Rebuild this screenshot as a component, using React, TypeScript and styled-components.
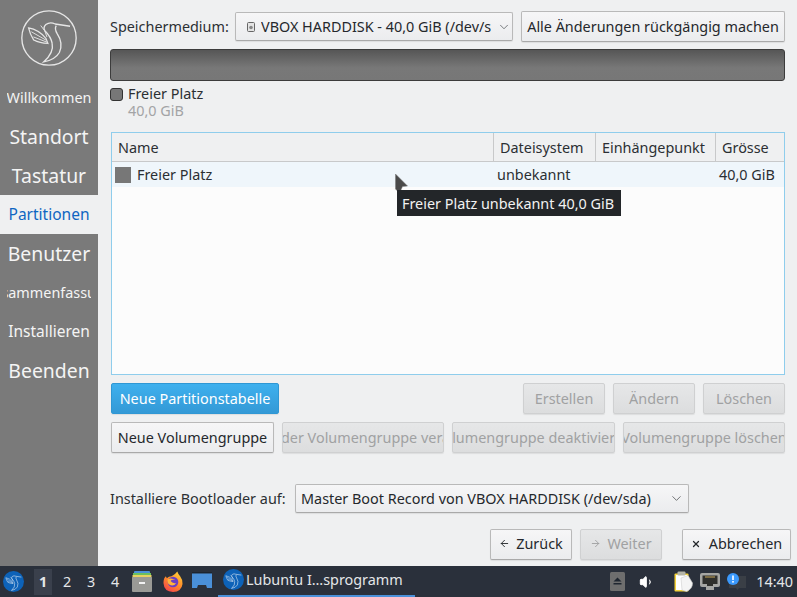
import React from 'react';
import styled, { createGlobalStyle } from 'styled-components';
import { ChevronDown, ArrowLeft, ArrowRight, X, Volume1 } from 'lucide-react';

const GlobalStyle = createGlobalStyle`
  html, body { margin: 0; padding: 0; width: 100%; height: 100%; overflow: hidden; }
  body { font-family: "Noto Sans", "Open Sans", sans-serif; font-size: 14.4px; color: #2b2f33; background: #eff0f1; }
  #root { height: 100%; }
`;

const BirdPaths = () => (
  <>
    <path d="M47.3 15.7 L33 13.5 Q28 11 24 14 Q21 17 23 20 Q29 26 30 32 Q32 41 22 50 Q33 48 37 41 Q41 32 35 23 Q32 18 34 15" fill="none" stroke="currentColor" strokeWidth="1.3" />
    <path d="M7.3 17.3 Q17 19 24 27.3 L26 32.3 Q18 32 12.3 29 Q8.5 23 7.3 17.3 Z" fill="none" stroke="currentColor" strokeWidth="1.2" />
    <path d="M10 21 L24 29 M12 26 L25 31 M19 15 Q24 20 25 26" fill="none" stroke="currentColor" strokeWidth="0.9" />
  </>
);

const Logo = () => (
  <LogoSvg viewBox="0 0 54 54">
    <circle cx="27" cy="27" r="26.2" fill="none" stroke="currentColor" strokeWidth="1.3" />
    <BirdPaths />
  </LogoSvg>
);

const LubuntuIcon = ({ size }: { size: number }) => (
  <BlueBird width={size} height={size} viewBox="0 0 54 54">
    <circle cx="27" cy="27" r="27" fill="#0d62b8" />
    <BirdPaths />
  </BlueBird>
);

const FilesIcon = () => (
  <svg width="20" height="21" viewBox="0 0 20 21">
    <rect x="2" y="0" width="16" height="4" rx="1" fill="#4a90d9" />
    <rect x="1" y="2" width="18" height="4" fill="#6cbf5e" />
    <rect x="0.5" y="4" width="19" height="3" fill="#e8d261" />
    <rect x="0" y="6" width="20" height="15" rx="1" fill="#9a9a96" />
    <rect x="7" y="11" width="6" height="2" fill="#f2f2f2" />
  </svg>
);

const FirefoxIcon = () => (
  <svg width="20" height="22" viewBox="0 0 21 22">
    <defs>
      <linearGradient id="ff" x1="0.8" y1="0" x2="0.2" y2="1">
        <stop offset="0" stopColor="#ffd23a" />
        <stop offset="0.5" stopColor="#ff8a2a" />
        <stop offset="1" stopColor="#f4414e" />
      </linearGradient>
    </defs>
    <path d="M15 0 Q16 3 18 5 Q21 9 20.5 13 Q19.5 21 10.5 21.5 Q1 21 0.5 12 Q0.5 7 3 5 L4 7 Q6 5 9 5 Q13 3 15 0 Z" fill="url(#ff)" />
    <circle cx="10.5" cy="11" r="5.6" fill="#6a3fc4" />
    <path d="M5 8 Q9 6 13 9 Q9 8 8 10 Q10 13 14 12 Q11 16 7 14 Q4 12 5 8 Z" fill="#ffb43c" />
  </svg>
);

const DesktopIcon = () => (
  <svg width="20" height="20" viewBox="0 0 20 20">
    <rect x="0" y="0" width="20" height="1.5" fill="#1d2530" />
    <path d="M0 1.5 H20 V16 H15 L14 13 H6 L5 16 H0 Z" fill="#4a90d9" />
  </svg>
);

const EjectIcon = () => (
  <svg width="15" height="19" viewBox="0 0 15 19">
    <rect width="15" height="19" rx="1.5" fill="#6e6e6e" />
    <path d="M7.5 5.5 L11.5 9.5 H3.5 Z M3.5 11 H11.5 V12.5 H3.5 Z" fill="#1f2630" />
  </svg>
);

const ClipboardIcon = () => (
  <svg width="19" height="21" viewBox="0 0 19 21">
    <rect x="0.5" y="2.5" width="14" height="18" rx="1" fill="#f5d33c" />
    <rect x="2" y="4" width="11" height="15" fill="#fff" />
    <rect x="3.5" y="0.5" width="8" height="4" rx="1" fill="#b5b5a8" />
    <path d="M7 7 L14 4.5 L18.5 12 Q18.5 18 12.5 20.5 L8 19 Z" fill="#f4f4f4" stroke="#cfcfcf" strokeWidth="0.6" />
  </svg>
);

const NetworkIcon = () => (
  <svg width="20" height="17" viewBox="0 0 20 17">
    <path d="M2 0 H18 Q20 0 20 2 V12 Q20 14 18 14 H14 V17 H6 V14 H2 Q0 14 0 12 V2 Q0 0 2 0 Z" fill="#a6a6a3" />
    <path d="M2.5 2.5 H17.5 V11 H13 V13 H7 V11 H2.5 Z" fill="#2f2f2c" />
    <path d="M5 3.5 H15 V4.5 H5 Z" fill="#c9a95a" />
  </svg>
);

const NotifyIcon = () => (
  <svg width="20" height="18" viewBox="0 0 20 18">
    <path d="M2 3 H19 V15 H12 L10.5 17 L9 15 H2 Z" fill="#3a3f46" />
    <circle cx="6" cy="6" r="6" fill="#3b99fc" />
    <rect x="5.2" y="2.5" width="1.6" height="4.5" fill="#fff" />
    <rect x="5.2" y="8" width="1.6" height="1.6" fill="#fff" />
  </svg>
);

const DiskIcon = () => (
  <svg width="8" height="10" viewBox="0 0 8 10">
    <rect x="0.5" y="0.5" width="7" height="9" rx="1" fill="#e4e4e4" stroke="#666" />
    <circle cx="4" cy="5.5" r="1.8" fill="#888" />
  </svg>
);

const sideItems: { label: string; size: number; active?: boolean }[] = [
  { label: 'Willkommen', size: 14.4 },
  { label: 'Standort', size: 19.4 },
  { label: 'Tastatur', size: 19.4 },
  { label: 'Partitionen', size: 15.5, active: true },
  { label: 'Benutzer', size: 19.4 },
  { label: 'Zusammenfassung', size: 14.4 },
  { label: 'Installieren', size: 15.5 },
  { label: 'Beenden', size: 19.4 },
];

export default function App() {
  return (
    <Screen>
      <GlobalStyle />
      <Window>
        <Sidebar>
          <LogoSlot><Logo /></LogoSlot>
          {sideItems.map((item) => (
            <SideItem key={item.label} $active={item.active}>
              <SideClip>
                <SideLabel $size={item.size} $active={item.active}>{item.label}</SideLabel>
              </SideClip>
            </SideItem>
          ))}
        </Sidebar>

        <Main>
          <Page>
            <TopRow>
              <FieldLabel $width={117}>Speichermedium:</FieldLabel>
              <DiskCombo>
                <DiskIcon />
                <ComboText>VBOX HARDDISK - 40,0 GiB (/dev/sda)</ComboText>
                <ChevronDown size={14} strokeWidth={1} />
              </DiskCombo>
              <RevertButton>Alle Änderungen rückgängig machen</RevertButton>
            </TopRow>

            <UsageBar />

            <Legend>
              <Swatch />
              <LegendText>
                <LegendName>Freier Platz</LegendName>
                <LegendSize>40,0 GiB</LegendSize>
              </LegendText>
            </Legend>

            <TableFrame>
              <HeadRow>
                <HeadCell>Name</HeadCell>
                <HeadCell>Dateisystem</HeadCell>
                <HeadCell>Einhängepunkt</HeadCell>
                <HeadCell $last>Grösse</HeadCell>
              </HeadRow>
              <BodyRow>
                <NameCell><RowSwatch />Freier Platz</NameCell>
                <BodyCell>unbekannt</BodyCell>
                <BodyCell />
                <BodyCell>40,0 GiB</BodyCell>
              </BodyRow>
            </TableFrame>

            <ActionRow>
              <PrimaryButton>Neue Partitionstabelle</PrimaryButton>
              <Spacer />
              <SmallAction disabled>Erstellen</SmallAction>
              <SmallAction disabled>Ändern</SmallAction>
              <SmallAction disabled>Löschen</SmallAction>
            </ActionRow>

            <VolumeRow>
              <Button>Neue Volumengruppe</Button>
              <Button disabled><Clip>Größe der Volumengruppe verändern</Clip></Button>
              <Button disabled><Clip>Volumengruppe deaktivieren</Clip></Button>
              <Button disabled><Clip>Volumengruppe löschen</Clip></Button>
            </VolumeRow>

            <BootRow>
              <FieldLabel $width={178}>Installiere Bootloader auf:</FieldLabel>
              <BootCombo>
                <ComboText>Master Boot Record von VBOX HARDDISK (/dev/sda)</ComboText>
                <ChevronDown size={15} strokeWidth={1} />
              </BootCombo>
            </BootRow>
          </Page>

          <NavRow>
            <NavButton><ArrowLeft size={11} />Zurück</NavButton>
            <NavButton disabled><ArrowRight size={11} />Weiter</NavButton>
            <CancelButton><X size={10} strokeWidth={3} />Abbrechen</CancelButton>
          </NavRow>
        </Main>
      </Window>

      <Taskbar>
        <StartSlot><LubuntuIcon size={21} /></StartSlot>
        <Desks>
          <Desk $current>1</Desk>
          <Desk>2</Desk>
          <Desk>3</Desk>
          <Desk>4</Desk>
        </Desks>
        <Launchers>
          <FilesIcon />
          <FirefoxIcon />
          <DesktopSlot><DesktopIcon /></DesktopSlot>
        </Launchers>
        <TaskButton>
          <LubuntuIcon size={21} />
          <span>Lubuntu I…sprogramm</span>
        </TaskButton>
        <Tray>
          <EjectSlot><EjectIcon /></EjectSlot>
          <SpeakerSlot><Volume1 size={16} fill="#fff" strokeWidth={1.5} /></SpeakerSlot>
          <ClipboardIcon />
          <NetworkIcon />
          <NotifyIcon />
          <Clock>14:40</Clock>
        </Tray>
      </Taskbar>

      <Cursor viewBox="0 0 13 20">
        <path d="M0.5 0 L12.5 12 L7.5 12.5 L4.5 19 L0.5 15 Z" fill="#4a4a4a" stroke="#777" strokeWidth="0.5" />
      </Cursor>
      <Tooltip>Freier Platz unbekannt 40,0 GiB</Tooltip>
    </Screen>
  );
}

const Screen = styled.div`
  position: relative;
  width: 797px;
  height: 597px;
  display: flex;
  flex-direction: column;
  overflow: hidden;
`;

const Window = styled.div`
  flex: 1;
  display: flex;
  min-height: 0;
`;

const Sidebar = styled.nav`
  width: 98px;
  flex: none;
  background: #7a7a7a;
  display: flex;
  flex-direction: column;
`;

const LogoSlot = styled.div`
  height: 78px;
  flex: none;
  display: flex;
  justify-content: center;
  padding-top: 10px;
  box-sizing: border-box;
`;

const LogoSvg = styled.svg`
  width: 56px;
  height: 56px;
  color: #e6e6e6;
`;

const BlueBird = styled.svg`
  color: #fff;
  flex: none;
`;

const SideItem = styled.div<{ $active?: boolean }>`
  height: 39px;
  flex: none;
  display: flex;
  align-items: center;
  justify-content: center;
  background: ${(p) => (p.$active ? '#eff0f1' : 'transparent')};
`;

const SideClip = styled.div`
  width: 84px;
  display: flex;
  justify-content: center;
  overflow: hidden;
`;

const SideLabel = styled.span<{ $size: number; $active?: boolean }>`
  flex: none;
  white-space: nowrap;
  font-size: ${(p) => p.$size}px;
  margin-bottom: ${(p) => (p.$size === 15.5 ? 2 : 0)}px;
  color: ${(p) => (p.$active ? '#0f66c2' : '#f4f4f4')};
`;

const Main = styled.main`
  flex: 1;
  min-width: 0;
  display: flex;
  flex-direction: column;
`;

const Page = styled.div`
  flex: 1;
  display: flex;
  flex-direction: column;
  padding: 11px 12px 0;
  min-height: 0;
`;

const TopRow = styled.div`
  height: 31px;
  display: flex;
  align-items: center;
  gap: 8px;
`;

const FieldLabel = styled.span<{ $width: number }>`
  flex: none;
  width: ${(p) => p.$width}px;
  white-space: nowrap;
`;

const raised = `
  box-sizing: border-box;
  border: 1px solid #b9b9b9;
  border-bottom-color: #a9a9a9;
  border-radius: 2px;
  background: linear-gradient(#f6f6f7, #ebecee);
  box-shadow: 0 1px 1px rgba(0, 0, 0, 0.08);
  font: inherit;
  color: #25282c;
`;

const DiskCombo = styled.div`
  ${raised}
  width: 278px;
  height: 29px;
  flex: none;
  display: flex;
  align-items: center;
  gap: 6px;
  padding: 0 1px 0 11px;
`;

const ComboText = styled.span`
  flex: 1;
  min-width: 0;
  overflow: hidden;
  white-space: nowrap;
`;

const Button = styled.button`
  ${raised}
  height: 31px;
  padding: 0;
  display: flex;
  align-items: center;
  justify-content: center;
  gap: 6px;
  overflow: hidden;
  white-space: nowrap;

  &:disabled {
    background: linear-gradient(#e6e7e8, #dcddde);
    border-color: #cfd0d1;
    color: #a0a1a2;
  }
`;

const RevertButton = styled(Button)`
  width: 264px;
  flex: none;
`;

const UsageBar = styled.div`
  height: 32px;
  margin-top: 7px;
  box-sizing: border-box;
  border: 1px solid #3c3c3c;
  border-radius: 3px;
  background: linear-gradient(#565656, #787878 60%, #777);
`;

const Legend = styled.div`
  display: flex;
  gap: 5px;
  margin-top: 6px;
  height: 45px;
`;

const LegendText = styled.div`
  display: flex;
  flex-direction: column;
`;

const Swatch = styled.div`
  width: 13px;
  height: 13px;
  margin-top: 1px;
  box-sizing: border-box;
  background: #777;
  border: 1px solid #333;
  border-radius: 3px;
`;

const LegendName = styled.div`
  line-height: 16px;
  margin-top: -1px;
`;

const LegendSize = styled.div`
  line-height: 16px;
  margin-top: 1px;
  color: #a3a4a6;
`;

const TableFrame = styled.div`
  margin-left: 1px;
  height: 243px;
  box-sizing: border-box;
  border: 1px solid #8fcdec;
  background: #fcfcfc;
`;

const columns = 'grid-template-columns: 382px 102px 120px 1fr;';

const HeadRow = styled.div`
  display: grid;
  ${columns}
  height: 29px;
  box-sizing: border-box;
  background: #eff0f1;
  border-bottom: 1px solid #c8c9ca;
`;

const HeadCell = styled.div<{ $last?: boolean }>`
  display: flex;
  align-items: center;
  padding-left: 6px;
  box-sizing: border-box;
  border-right: ${(p) => (p.$last ? 'none' : '1px solid #c8c9ca')};
`;

const BodyRow = styled.div`
  display: grid;
  ${columns}
  height: 25px;
  background: #eff6fb;
`;

const BodyCell = styled.div`
  display: flex;
  align-items: center;
  padding-left: 3px;
`;

const NameCell = styled(BodyCell)`
  gap: 6px;
`;

const RowSwatch = styled.span`
  width: 16px;
  height: 16px;
  background: #777;
`;

const ActionRow = styled.div`
  display: flex;
  gap: 8px;
  margin: 8px 0 0 1px;
`;

const PrimaryButton = styled(Button)`
  width: 168px;
  border-color: #2f97d4;
  background: linear-gradient(#3eb0ee, #3399d6);
  color: #fff;
`;

const Spacer = styled.div`
  flex: 1;
`;

const SmallAction = styled(Button)`
  width: 82px;
`;

const VolumeRow = styled.div`
  display: grid;
  grid-template-columns: 163px 162px 163px 162px;
  gap: 8px;
  margin: 8px 0 0 1px;
`;

const Clip = styled.span`
  flex: none;
`;

const BootRow = styled.div`
  display: flex;
  align-items: center;
  gap: 7px;
  height: 29px;
  margin-top: 31px;
`;

const BootCombo = styled.div`
  ${raised}
  width: 394px;
  height: 29px;
  flex: none;
  display: flex;
  align-items: center;
  gap: 6px;
  padding: 0 4px 0 5px;
`;

const NavRow = styled.div`
  display: flex;
  justify-content: flex-end;
  gap: 8px;
  padding: 0 6px 6px 0;
`;

const NavButton = styled(Button)`
  width: 82px;
  padding-bottom: 2px;
`;

const CancelButton = styled(Button)`
  width: 109px;
  margin-left: 12px;
  gap: 8px;
  padding-bottom: 2px;
`;

const Taskbar = styled.footer`
  height: 31px;
  flex: none;
  background: #2a303b;
  color: #e4e6e8;
  display: flex;
  align-items: center;
`;

const StartSlot = styled.div`
  width: 31px;
  padding-left: 3px;
  box-sizing: border-box;
  display: flex;
`;

const Desks = styled.div`
  display: flex;
  margin-left: 3px;
`;

const Desk = styled.div<{ $current?: boolean }>`
  width: 18px;
  height: 26px;
  margin-right: 6px;
  display: flex;
  align-items: center;
  justify-content: center;
  font-weight: ${(p) => (p.$current ? 700 : 400)};
  background: ${(p) => (p.$current ? '#3a404c' : 'transparent')};
`;

const Launchers = styled.div`
  display: flex;
  align-items: center;
  gap: 11px;
  margin-left: 2px;
`;

const DesktopSlot = styled.div`
  display: flex;
  margin-left: -2px;
`;

const TaskButton = styled.div`
  width: 197px;
  height: 31px;
  margin-left: 6px;
  box-sizing: border-box;
  display: flex;
  align-items: center;
  gap: 2px;
  padding: 0 0 2px 5px;
  border-bottom: 2px solid #4a90d9;
  white-space: nowrap;
`;

const Tray = styled.div`
  margin-left: auto;
  display: flex;
  align-items: center;
  gap: 7px;
  padding-right: 4px;
`;

const EjectSlot = styled.div`
  display: flex;
  margin-right: 7px;
`;

const SpeakerSlot = styled.div`
  display: flex;
  color: #fff;
  margin-right: 12px;
`;

const Clock = styled.span`
  margin-left: 2px;
`;

const Cursor = styled.svg`
  position: absolute;
  left: 395px;
  top: 174px;
  width: 13px;
  height: 20px;
`;

const Tooltip = styled.div`
  position: absolute;
  left: 397px;
  top: 190px;
  width: 224px;
  height: 26px;
  box-sizing: border-box;
  padding-left: 5px;
  display: flex;
  align-items: center;
  background: #232629;
  color: #f2f2f2;
  white-space: nowrap;
`;
